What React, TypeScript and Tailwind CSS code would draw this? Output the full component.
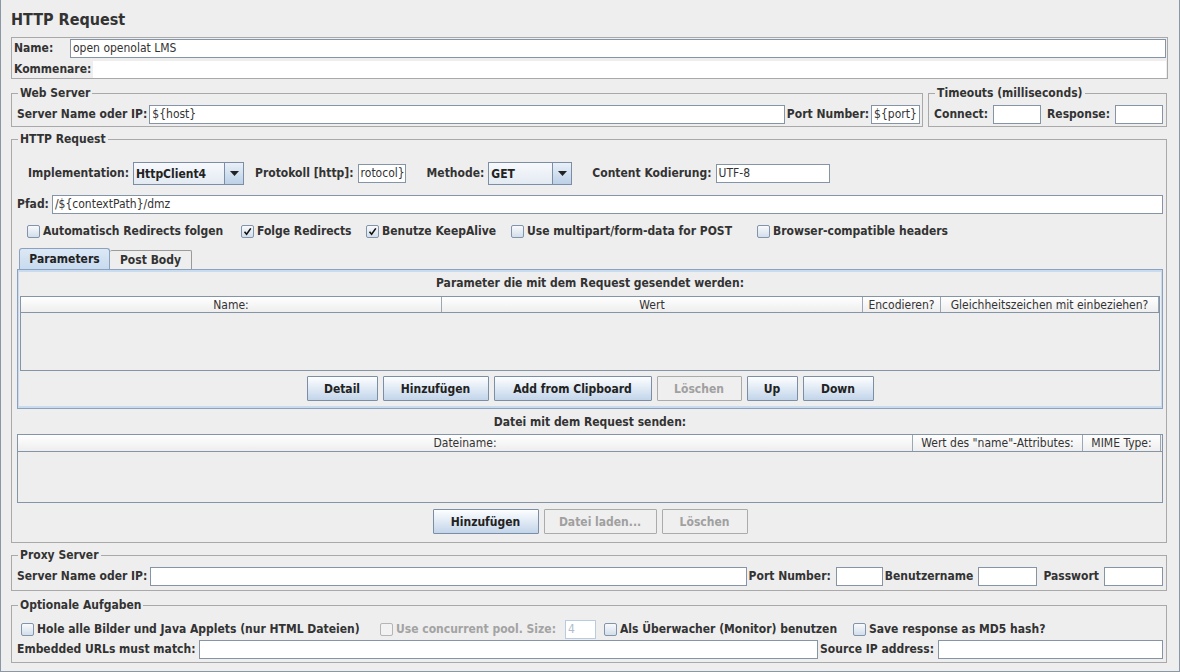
import React from "react";

const FONT = "font-['DejaVu_Sans_Condensed','DejaVu_Sans',sans-serif]";

function Label({ children, className = "", disabled = false }: { children: React.ReactNode; className?: string; disabled?: boolean }) {
    return (
        <span className={`font-bold text-[12px] leading-[15px] whitespace-nowrap ${disabled ? "text-[#a3a3a3]" : "text-[#333]"} ${className}`}>
            {children}
        </span>
    );
}

function Field({ value = "", className = "", disabled = false }: { value?: string; className?: string; disabled?: boolean }) {
    return (
        <div
            className={`h-[19px] bg-white border px-[2px] text-[12px] leading-[17px] whitespace-nowrap overflow-hidden ${
                disabled ? "border-[#b9cbe0] text-[#b0bccb]" : "border-[#8595a6] text-[#333]"
            } ${className}`}
        >
            {value}
        </div>
    );
}

function Check({ checked = false, disabled = false }: { checked?: boolean; disabled?: boolean }) {
    return (
        <span
            className={`w-[13px] h-[13px] shrink-0 rounded-[2px] border flex items-center justify-center ${
                disabled ? "border-[#b5b5b5] bg-[#f2f2f2]" : "border-[#8194ab] bg-gradient-to-b from-[#f8fafc] to-[#d3deea]"
            }`}
        >
            {checked && (
                <svg width="9" height="9" viewBox="0 0 9 9">
                    <path d="M1.5 4.8 L3.6 7.2 L7.8 1.4" stroke="#111" strokeWidth="1.6" fill="none" />
                </svg>
            )}
        </span>
    );
}

function CheckItem({ label, checked = false, disabled = false, className = "" }: { label: string; checked?: boolean; disabled?: boolean; className?: string }) {
    return (
        <div className={`flex items-center gap-[3px] shrink-0 ${className}`}>
            <Check checked={checked} disabled={disabled} />
            <Label disabled={disabled}>{label}</Label>
        </div>
    );
}

function Button({ children, className = "", disabled = false }: { children: React.ReactNode; className?: string; disabled?: boolean }) {
    return (
        <div
            className={`h-[25px] flex items-center justify-center border rounded-[1px] font-bold text-[12px] ${
                disabled
                    ? "border-[#ababab] bg-[#efefef] text-[#a0a0a0]"
                    : "border-[#7b8ea6] bg-gradient-to-b from-[#fdfeff] to-[#c3d5ea] text-[#222]"
            } ${className}`}
        >
            {children}
        </div>
    );
}

function Combo({ value, className = "" }: { value: string; className?: string }) {
    return (
        <div className={`h-[23px] flex border border-[#7b8ea6] ${className}`}>
            <div className="flex-1 flex items-center pl-[2px] font-bold text-[12px] text-[#222] bg-gradient-to-b from-[#f7f9fc] to-[#e3eaf2]">
                {value}
            </div>
            <div className="w-[19px] flex items-center justify-center border-l border-[#7b8ea6] bg-gradient-to-b from-[#e9f0f8] to-[#bcd0e7]">
                <svg width="9" height="5" viewBox="0 0 9 5">
                    <path d="M0 0 H9 L4.5 5 Z" fill="#222" />
                </svg>
            </div>
        </div>
    );
}

function Box({ legend, className = "", children }: { legend: string; className?: string; children: React.ReactNode }) {
    return (
        <fieldset className={`border border-[#a9a9a9] pl-[5px] ${className}`}>
            <legend className="ml-[1px] px-[2px] font-bold text-[12px] leading-[14px] text-[#333]">{legend}</legend>
            {children}
        </fieldset>
    );
}

function HeadCell({ children, className = "" }: { children: React.ReactNode; className?: string }) {
    return (
        <div className={`h-full flex items-center justify-center border-r border-[#9aa7b4] bg-gradient-to-b from-white to-[#eeeeee] text-[12px] text-[#333] whitespace-nowrap ${className}`}>
            {children}
        </div>
    );
}

export default function App() {
    return (
        <div className={`w-[1180px] h-[672px] overflow-hidden bg-[#eeeeee] border-x border-b border-[#8a97a4] text-[#333] ${FONT}`}>
            <div className="pl-[10px] pr-[11px]">
                <div className="h-[37px] pt-[10px] font-bold text-[16px] leading-[20px] text-[#333]">HTTP Request</div>

                <div className="h-[42px] border border-[#a9a9a9] flex flex-col">
                    <div className="h-[20px] flex items-center pl-[2px]">
                        <Label className="w-[53px]">Name:</Label>
                        <Field value="open openolat LMS" className="flex-1 ml-[3px] mr-[1px]" />
                    </div>
                    <div className="mt-[2px] h-[18px] flex items-center pl-[2px]">
                        <Label>Kommenare:</Label>
                        <div className="flex-1 h-[17px] bg-white ml-[2px] mr-[1px]" />
                    </div>
                </div>

                <div className="flex gap-[5px] mt-[7px] mr-[1px]">
                    <Box legend="Web Server" className="w-[915px] pr-[2px] pb-[2px]">
                        <div className="mt-[5px] flex items-center">
                            <Label>Server Name oder IP:</Label>
                            <Field value="${host}" className="flex-1 ml-[2px]" />
                            <Label className="ml-[2px]">Port Number:</Label>
                            <Field value="${port}" className="w-[49px] ml-[2px]" />
                        </div>
                    </Box>
                    <Box legend="Timeouts (milliseconds)" className="flex-1 pr-[3px] pb-[2px]">
                        <div className="mt-[5px] flex items-center">
                            <Label>Connect:</Label>
                            <Field className="w-[48px] ml-[5px]" />
                            <Label className="ml-[6px]">Response:</Label>
                            <Field className="w-[48px] ml-[5px]" />
                        </div>
                    </Box>
                </div>

                <Box legend="HTTP Request" className="mt-[5px] mr-[1px] pr-[3px] pb-[8px]">
                    <div className="mt-[16px] h-[23px] flex items-center pl-[11px]">
                        <Label>Implementation:</Label>
                        <Combo value="HttpClient4" className="w-[111px] ml-[4px]" />
                        <Label className="ml-[11px]">Protokoll [http]:</Label>
                        <Field value="rotocol}" className="w-[48px] ml-[4px]" />
                        <Label className="ml-[21px]">Methode:</Label>
                        <Combo value="GET" className="w-[84px] ml-[4px]" />
                        <Label className="ml-[20px]">Content Kodierung:</Label>
                        <Field value="UTF-8" className="w-[114px] ml-[4px]" />
                    </div>

                    <div className="mt-[10px] flex items-center">
                        <Label>Pfad:</Label>
                        <Field value="/${contextPath}/dmz" className="flex-1 ml-[3px]" />
                    </div>

                    <div className="mt-[10px] h-[15px] flex items-center pl-[10px]">
                        <CheckItem label="Automatisch Redirects folgen" className="w-[214px]" />
                        <CheckItem label="Folge Redirects" checked className="w-[125px]" />
                        <CheckItem label="Benutze KeepAlive" checked className="w-[145px]" />
                        <CheckItem label="Use multipart/form-data for POST" className="w-[246px]" />
                        <CheckItem label="Browser-compatible headers" />
                    </div>

                    <div className="mt-[9px] h-[21px] flex items-end pl-[2px]">
                        <div className="h-[21px] w-[91px] flex items-center justify-center border border-b-0 border-[#8ba1bd] rounded-t-[3px] bg-gradient-to-b from-[#dce8f5] to-[#c8dbef] font-bold text-[12px] text-[#222]">
                            Parameters
                        </div>
                        <div className="h-[19px] w-[82px] flex items-center justify-center border border-b-0 border-l-0 border-[#9a9a9a] rounded-t-[2px] bg-[#eeeeee] font-bold text-[12px] text-[#333]">
                            Post Body
                        </div>
                    </div>

                    <div className="h-[140px] border border-[#8ba1bd] bg-[#c8dbef] pt-[2px] px-px pb-[2px]">
                        <div className="h-full bg-[#eeeeee] flex flex-col">
                            <div className="mt-[3px] h-[16px] flex items-center justify-center">
                                <Label>Parameter die mit dem Request gesendet werden:</Label>
                            </div>
                            <div className="mt-[5px] mx-px h-[75px] border border-[#8595a6] flex flex-col">
                                <div className="h-[16px] flex border-b border-[#8595a6]">
                                    <HeadCell className="w-[421px]">Name:</HeadCell>
                                    <HeadCell className="w-[421px]">Wert</HeadCell>
                                    <HeadCell className="w-[78px]">Encodieren?</HeadCell>
                                    <HeadCell className="w-[218px]">Gleichheitszeichen mit einbeziehen?</HeadCell>
                                </div>
                            </div>
                            <div className="mt-[5px] flex justify-center gap-[5px]">
                                <Button className="w-[71px]">Detail</Button>
                                <Button className="w-[106px]">Hinzufügen</Button>
                                <Button className="w-[158px]">Add from Clipboard</Button>
                                <Button className="w-[85px]" disabled>Löschen</Button>
                                <Button className="w-[51px]">Up</Button>
                                <Button className="w-[71px]">Down</Button>
                            </div>
                        </div>
                    </div>

                    <div className="mt-[5px] h-[16px] flex items-center justify-center">
                        <Label>Datei mit dem Request senden:</Label>
                    </div>
                    <div className="mt-[4px] h-[69px] border border-[#8595a6] flex flex-col">
                        <div className="h-[17px] flex border-b border-[#8595a6]">
                            <HeadCell className="w-[895px]">Dateiname:</HeadCell>
                            <HeadCell className="w-[170px]">Wert des "name"-Attributes:</HeadCell>
                            <HeadCell className="w-[78px]">MIME Type:</HeadCell>
                        </div>
                    </div>
                    <div className="mt-[6px] flex justify-center gap-[5px]">
                        <Button className="w-[106px]">Hinzufügen</Button>
                        <Button className="w-[113px]" disabled>Datei laden...</Button>
                        <Button className="w-[86px]" disabled>Löschen</Button>
                    </div>
                </Box>

                <Box legend="Proxy Server" className="mt-[5px] mr-[1px] pr-[3px] pb-[4px]">
                    <div className="mt-[5px] flex items-center">
                        <Label>Server Name oder IP:</Label>
                        <Field className="flex-1 ml-[3px]" />
                        <Label className="ml-[2px]">Port Number:</Label>
                        <Field className="w-[47px] ml-[5px]" />
                        <Label className="ml-[2px]">Benutzername</Label>
                        <Field className="w-[59px] ml-[5px]" />
                        <Label className="ml-[6px]">Passwort</Label>
                        <Field className="w-[59px] ml-[5px]" />
                    </div>
                </Box>

                <Box legend="Optionale Aufgaben" className="mt-[7px] mr-[1px] pr-[3px] pb-[3px]">
                    <div className="mt-[8px] h-[19px] flex items-center pl-[4px]">
                        <CheckItem label="Hole alle Bilder und Java Applets (nur HTML Dateien)" className="w-[359px]" />
                        <CheckItem label="Use concurrent pool. Size:" disabled className="w-[185px]" />
                        <Field value="4" disabled className="w-[31px]" />
                        <CheckItem label="Als Überwacher (Monitor) benutzen" className="w-[249px] ml-[8px]" />
                        <CheckItem label="Save response as MD5 hash?" />
                    </div>
                    <div className="mt-[1px] flex items-center">
                        <Label>Embedded URLs must match:</Label>
                        <Field className="flex-1 ml-[4px]" />
                        <Label className="ml-[2px]">Source IP address:</Label>
                        <Field className="w-[225px] ml-[4px]" />
                    </div>
                </Box>
            </div>
        </div>
    );
}
